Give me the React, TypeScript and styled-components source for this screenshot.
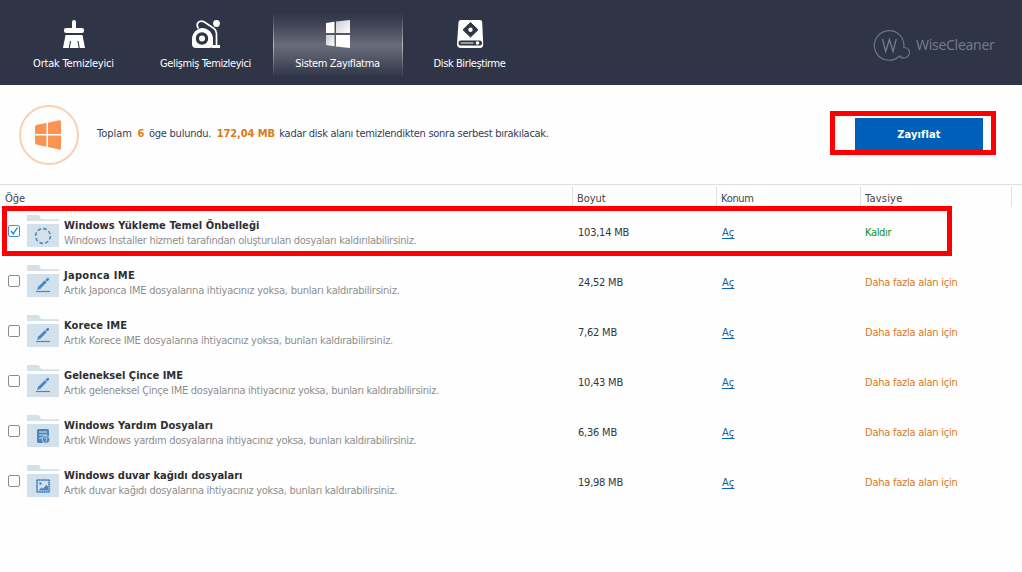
import React from 'react';
import styled, { createGlobalStyle } from 'styled-components';

const Global = createGlobalStyle`
  * { box-sizing: border-box; }
  html, body { margin: 0; padding: 0; background: #fefefe; }
  body { overflow: hidden; font-family: "DejaVu Sans Condensed", "DejaVu Sans", sans-serif; font-stretch: condensed; font-size: 11px; line-height: 15px; color: #33363d; }
`;

const Text = styled.span<{ $track?: number }>`
  white-space: pre;
  letter-spacing: ${(p) => p.$track ?? 0}px;
`;

const Page = styled.main`
  position: relative;
  width: 1022px;
  height: 572px;
  background: #fefefe;
  display: flex;
  flex-direction: column;
`;

const TopBar = styled.header`
  height: 85px;
  flex: none;
  padding: 13px 28px 0 9px;
  display: flex;
  align-items: flex-start;
  background: #2f3447;
`;

const Tab = styled.button<{ $active?: boolean }>`
  width: 130px;
  height: 64px;
  margin-right: 2px;
  padding: 5px 1px 0 0;
  border: 1px solid transparent;
  border-width: 0 1px;
  display: flex;
  flex-direction: column;
  align-items: center;
  gap: 6px;
  font: inherit;
  color: #fff;
  background: ${(p) => (p.$active ? 'linear-gradient(#2f3447, #484c5c 25%, #696d7a 50%, #565a69 68%, #2f3447)' : 'none')};
  border-image: ${(p) => (p.$active ? 'linear-gradient(#2f3447, #b9bbc2 50%, #2f3447) 1' : 'none')};
  svg { width: 32px; height: 32px; flex: none; }
`;

const Brand = styled.div`
  margin: 14px 0 0 auto;
  display: flex;
  align-items: center;
  gap: 5px;
  color: #737a8a;
  font: 400 14px/36px "Noto Sans", "Open Sans", sans-serif;
  svg { width: 38px; height: 36px; }
`;

const BrandName = styled(Text)`
  width: 78px;
`;

const Summary = styled.section`
  height: 99px;
  flex: none;
  padding: 0 39px 0 19px;
  display: flex;
  align-items: center;
`;

const Badge = styled.div`
  width: 60px;
  height: 60px;
  margin-right: 18px;
  border: 2px solid #fbcfb4;
  border-radius: 50%;
  display: grid;
  place-items: center;
  svg { width: 26px; height: 30px; margin-right: 2px; }
`;

const Message = styled.p`
  margin: 0 0 3px;
  display: flex;
  color: #343c57;
`;

const Strong = styled.b`
  margin: 0 4.5px 0 5.5px;
  color: #e07a10;
`;

const Action = styled.button`
  width: 128px;
  height: 33px;
  margin-left: auto;
  border: 0;
  padding: 0;
  font: inherit;
  font-weight: bold;
  color: #fff;
  background: #005fb8;
`;

const Row = styled.div`
  display: grid;
  grid-template-columns: 573px 144px 144px 151px;
  height: 50px;
  flex: none;
  align-items: center;
`;

const HeadRow = styled(Row)`
  height: 23px;
  border-top: 1px solid #dcdfe4;
  color: #3f424a;
`;

const HeadCell = styled.div`
  height: 20px;
  margin-top: 2px;
  padding: 4px 4px 0;
  border-right: 1px solid #dde2ea;
  &:first-child { padding-left: 5px; }
`;

const Item = styled.div`
  display: flex;
  align-items: center;
  padding-left: 8px;
`;

const Check = styled.span<{ $on?: boolean }>`
  width: 12px;
  height: 12px;
  margin: -2px 7px 0 0;
  flex: none;
  border: 1px solid ${(p) => (p.$on ? '#3a92dc' : '#8b8b8b')};
  border-radius: 2px;
  display: grid;
  svg { width: 10px; height: 10px; }
`;

const Folder = styled.svg`
  width: 32px;
  height: 32px;
  margin: -2px 5px 0 0;
  flex: none;
`;

const Label = styled.div`
  padding-top: 2px;
`;

const Title = styled.div`
  font-weight: bold;
  color: #2d2f33;
`;

const Desc = styled.div`
  color: #8e8e8e;
`;

const Cell = styled.div<{ $tone?: string }>`
  padding-left: 4px;
  color: ${(p) => p.$tone ?? '#33363d'};
`;

const SizeCell = styled(Cell)`
  padding-left: 5px;
`;

const Link = styled.a`
  margin-left: 1px;
  color: #0f64a8;
  text-decoration: underline;
  text-decoration-skip-ink: none;
  text-underline-offset: 2px;
`;

const Mark = styled.div<{ $x: number; $y: number; $w: number; $h: number }>`
  position: absolute;
  left: ${(p) => p.$x}px;
  top: ${(p) => p.$y}px;
  width: ${(p) => p.$w}px;
  height: ${(p) => p.$h}px;
  border: 5px solid #fe0000;
`;

const Broom = () => (
  <svg viewBox="0 0 32 32" fill="#fff">
    <rect x="14" y="2" width="4" height="10" rx="2" />
    <rect x="6" y="10" width="20" height="5" rx="2" />
    <path d="M7.500 17h17l2.500 13H5z" />
    <path d="M12.500 23l-1.200 7M20 23l1.200 7" stroke="#2f3447" strokeWidth="1.100" />
  </svg>
);

const Vacuum = () => (
  <svg viewBox="0 0 32 32" fill="none">
    <path d="M12.500 10C7 10 2 15 2 21v5q0 4 4 4h13q4 0 4-4v-5c0-6-5-11-10.500-11z" fill="#fff" />
    <circle cx="12" cy="20.500" r="4.600" stroke="#2f3447" strokeWidth="3.200" fill="#fff" />
    <path d="M8.500 10.500C5 5.500 9.500 1.500 14 3.800l10 6.700q2.500 2 2.500 5V28" stroke="#fff" strokeWidth="1.700" />
    <circle cx="26.500" cy="5.500" r="3.400" fill="#fff" />
    <path d="M21.500 27h8.500v3h-8.500z" fill="#fff" />
  </svg>
);

const WindowsLogo = () => (
  <svg viewBox="0 0 32 32">
    <defs>
      <linearGradient id="pane" x1="0" x2="1" y1="0" y2="1">
        <stop offset="0" stopColor="#c9cbd2" />
        <stop offset="1" stopColor="#fff" />
      </linearGradient>
    </defs>
    <path d="M4 5l8.500-1.200V15H4z" fill="#fff" />
    <path d="M14 3.600L28 2v13H14z" fill="url(#pane)" />
    <path d="M4 17h8.500v11.200L4 27z" fill="url(#pane)" />
    <path d="M14 17h14v13l-14-1.600z" fill="#fff" />
  </svg>
);

const Disk = () => (
  <svg viewBox="0 0 32 32">
    <path d="M7 2h19q2 0 2.200 2l1 22q0 4-3 4H7q-4 0-4-4L4.500 4q.2-2 2.500-2z" fill="#fff" />
    <path d="M16.500 4.500l7.500 7.300-7.500 7.300L9 11.800z" fill="#2f3447" stroke="#2f3447" strokeLinejoin="round" />
    <circle cx="16.500" cy="11.800" r="2.200" fill="#fff" />
    <rect x="4.500" y="22.500" width="23.500" height="5" rx="2.500" fill="#2f3447" />
    <path d="M6.500 25h13" stroke="#fff" />
    <circle cx="23.500" cy="25" r="1.800" fill="#fff" />
  </svg>
);

const BrandMark = () => (
  <svg viewBox="0 0 38 36" fill="none" stroke="#6d7484" strokeWidth="1.200">
    <path d="M30.800 20.500A14.800 14.800 0 1 0 26.500 29c2.500 3 7 2.500 9-.3 2.500-4-.2-8.500-4.700-8.200z" />
    <path d="M9.500 12l3.200 12.500 3.700-12 3.700 12L23.300 12" stroke="#7b8291" />
  </svg>
);

const BadgeLogo = () => (
  <svg viewBox="0 0 26 30" fill="#fb9353">
    <path d="M2 4.800L11.500 3v11H0V7q0-1.800 2-2.200zM13 2.700l11-2.400q2-.3 2 1.500V14H13zM0 15.500h11.500v11.300L2 24.800q-2-.4-2-2zM13 15.500h13v12.500q0 2-2 1.600l-11-2.500z" />
  </svg>
);

const GLYPHS: Record<string, React.ReactNode> = {
  ring: <circle cx="16" cy="21" r="7.400" fill="none" stroke="#5589b8" strokeWidth="1.600" strokeDasharray="3.600 2.210" />,
  pencil: (
    <>
      <path d="M12.500 22.500l6.300-6.300" stroke="#4a86bd" strokeWidth="2.800" />
      <path d="M10 25l1.300-4 2.700 2.500z" fill="#4a86bd" />
      <path d="M20.100 14.900l.8-.8" stroke="#4a86bd" strokeWidth="2.600" strokeLinecap="round" />
      <path d="M9 26.500h14" stroke="#4a86bd" strokeWidth="1.200" />
    </>
  ),
  help: (
    <>
      <rect x="10" y="14" width="12" height="14" rx="1.500" fill="#4a86bd" />
      <path d="M12 17h8M12 20h8M12 23h4" stroke="#d3e1eb" />
      <circle cx="19" cy="24.500" r="3.800" fill="#4a86bd" stroke="#d3e1eb" strokeWidth=".8" />
      <path d="M17.800 23.800q.2-1.300 1.300-1.200 1.200.2 1 1.200l-1 1.200v1.600" fill="none" stroke="#d3e1eb" strokeWidth=".8" />
    </>
  ),
  image: (
    <>
      <rect x="9.800" y="14.800" width="12.600" height="12.400" fill="none" stroke="#4a86bd" strokeWidth="1.500" strokeDasharray="1.500 .6" />
      <rect x="10.500" y="15.500" width="11.200" height="11" fill="none" stroke="#4a86bd" strokeWidth=".6" />
      <circle cx="13.500" cy="18.500" r="1.200" fill="#4a86bd" />
      <path d="M11.500 25.500l3-3 1.500 1.200 3.300-4 1.700 2v3.800z" fill="#4a86bd" />
    </>
  ),
};

const ORANGE = '#e0771a';
const MORE: Tracked = ['Daha fazla alan için', -0.244];

type Tracked = [text: string, track?: number];

interface Entry {
  icon: string;
  on?: boolean;
  title: Tracked;
  desc: Tracked;
  size: Tracked;
  tip: Tracked;
  tone: string;
}

const entries: Entry[] = [
  { icon: 'ring', on: true, title: ['Windows Yükleme Temel Önbelleği', 0.069], desc: ['Windows Installer hizmeti tarafından oluşturulan dosyaları kaldırılabilirsiniz.', -0.278], size: ['103,14 MB', -0.23], tip: ['Kaldır', -0.34], tone: '#129012' },
  { icon: 'pencil', title: ['Japonca IME', 0.311], desc: ['Artık Japonca IME dosyalarına ihtiyacınız yoksa, bunları kaldırabilirsiniz.', -0.236], size: ['24,52 MB', -0.23], tip: MORE, tone: ORANGE },
  { icon: 'pencil', title: ['Korece IME', 0.081], desc: ['Artık Korece IME dosyalarına ihtiyacınız yoksa, bunları kaldırabilirsiniz.', -0.251], size: ['7,62 MB', -0.21], tip: MORE, tone: ORANGE },
  { icon: 'pencil', title: ['Geleneksel Çince IME', 0.013], desc: ['Artık geleneksel Çinçe IME dosyalarına ihtiyacınız yoksa, bunları kaldırabilirsiniz.', -0.274], size: ['10,43 MB', -0.23], tip: MORE, tone: ORANGE },
  { icon: 'help', title: ['Windows Yardım Dosyaları', 0.04], desc: ['Artık Windows yardım dosyalarına ihtiyacınız yoksa, bunları kaldırabilirsiniz.', -0.289], size: ['6,36 MB', -0.21], tip: MORE, tone: ORANGE },
  { icon: 'image', title: ['Windows duvar kağıdı dosyaları', 0.01], desc: ['Artık duvar kağıdı dosyalarına ihtiyacınız yoksa, bunları kaldırabilirsiniz.', -0.284], size: ['19,98 MB', -0.23], tip: MORE, tone: ORANGE },
];

const T = ({ t: [text, track] }: { t: Tracked }) => <Text $track={track}>{text}</Text>;

export default function App() {
  return (
    <Page>
      <Global />
      <TopBar>
        <Tab><Broom /><T t={['Ortak Temizleyici', -0.2]} /></Tab>
        <Tab><Vacuum /><T t={['Gelişmiş Temizleyici', -0.39]} /></Tab>
        <Tab $active><WindowsLogo /><T t={['Sistem Zayıflatma', -0.35]} /></Tab>
        <Tab><Disk /><T t={['Disk Birleştirme', -0.4]} /></Tab>
        <Brand><BrandMark /><BrandName $track={-0.3}>WiseCleaner</BrandName></Brand>
      </TopBar>
      <Summary>
        <Badge><BadgeLogo /></Badge>
        <Message>
          <T t={['Toplam']} />
          <Strong><T t={['6', 0.1]} /></Strong>
          <T t={['öge bulundu.', -0.24]} />
          <Strong><T t={['172,04 MB', -0.1]} /></Strong>
          <T t={['kadar disk alanı temizlendikten sonra serbest bırakılacak.', -0.28]} />
        </Message>
        <Action><T t={['Zayıflat', 0.11]} /></Action>
      </Summary>
      <HeadRow>
        <HeadCell><T t={['Öğe']} /></HeadCell>
        <HeadCell><T t={['Boyut', -0.05]} /></HeadCell>
        <HeadCell><T t={['Konum', -0.3]} /></HeadCell>
        <HeadCell><T t={['Tavsiye', 0.21]} /></HeadCell>
      </HeadRow>
      {entries.map((e) => (
        <Row key={e.title[0]}>
          <Item>
            <Check $on={e.on}>
              {e.on && <svg viewBox="0 0 10 10"><path d="M2 5l2.300 2.800L8.500 1.500" fill="none" stroke="#1f7fd0" strokeWidth="1.300" /></svg>}
            </Check>
            <Folder viewBox="0 0 32 32">
              <path d="M0 0h11q1.500 0 2 2t2 2.200h17V6H0z" fill="#d5e1e6" />
              <rect y="9" width="32" height="23" fill="#d2e1eb" />
              {GLYPHS[e.icon]}
            </Folder>
            <Label>
              <Title><T t={e.title} /></Title>
              <Desc><T t={e.desc} /></Desc>
            </Label>
          </Item>
          <SizeCell><T t={e.size} /></SizeCell>
          <Cell><Link><T t={['Aç', 0.2]} /></Link></Cell>
          <Cell $tone={e.tone}><T t={e.tip} /></Cell>
        </Row>
      ))}
      <Mark $x={830} $y={111} $w={166} $h={44} />
      <Mark $x={2} $y={206} $w={950} $h={50} />
    </Page>
  );
}
